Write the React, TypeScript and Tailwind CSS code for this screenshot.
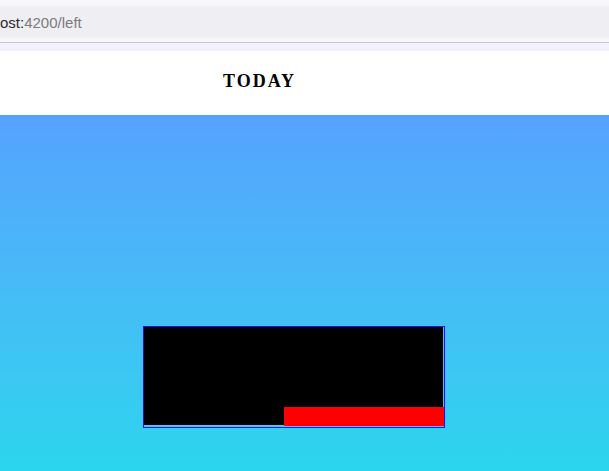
export default function App() {
  return (
    <div className="w-[609px] h-[471px] flex flex-col overflow-hidden bg-white">
      {/* browser chrome */}
      <div className="h-[6px] bg-[#f7f6f9]" />
      <div className="h-[32px] bg-[#efeef3] flex items-center pt-[3px] text-[15px] font-['Helvetica','Liberation_Sans',sans-serif]">
        <span className="text-[#2a2a2e]">ost:</span>
        <span className="text-[#7b7a80]">4200/left</span>
      </div>
      <div className="h-[4px] bg-[#f7f6fa]" />
      <div className="h-px bg-[#c9c7ce]" />
      <div className="h-[8px] bg-[#f3f1fe]" />

      {/* header */}
      <div className="h-[64px] bg-white flex items-center">
        <div className="w-[519px] text-center font-['Liberation_Serif',serif] font-bold text-[18px] tracking-[2px] text-black pb-[3px]">
          TODAY
        </div>
      </div>

      {/* body */}
      <div className="flex-1 bg-gradient-to-b from-[#55a2fe] to-[#2ad5ed] pt-[211px] pl-[143px]">
        <div className="w-[302px] h-[102px] border border-[#3b00ff] flex flex-col">
          <div className="h-[80px] bg-black mr-px" />
          <div className="flex h-[19px]">
            <div className="w-[140px] flex flex-col">
              <div className="flex-1 bg-black" />
              <div className="h-px bg-[#3fd0f0]" />
            </div>
            <div className="flex-1 bg-[#ff0000]" />
          </div>
        </div>
      </div>
    </div>
  );
}
